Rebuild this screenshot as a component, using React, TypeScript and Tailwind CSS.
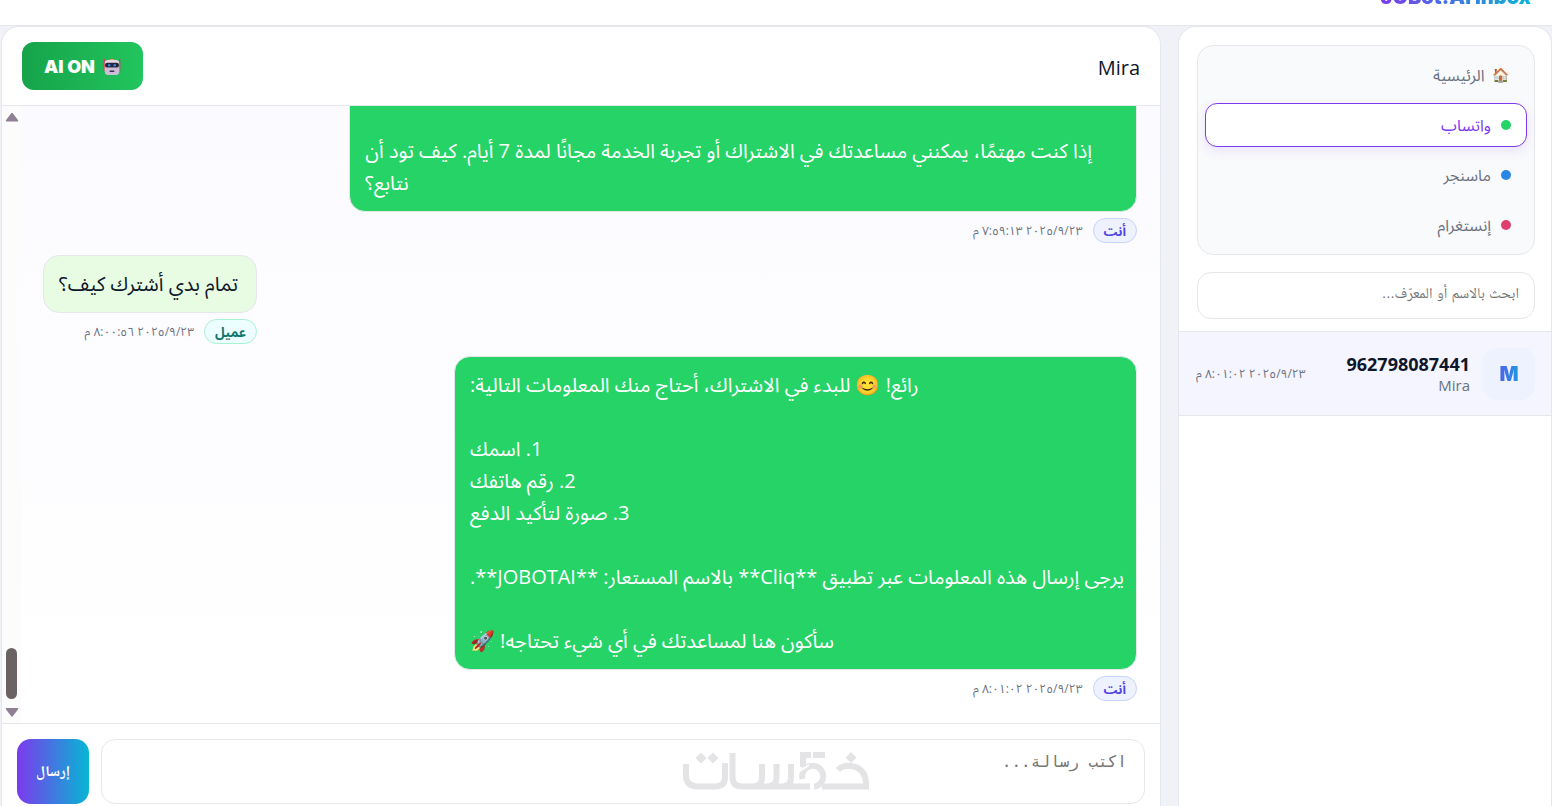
import { useState } from "react";

type Message = { id: number; from: "me" | "client"; text: string; time: string; width: string };

const messages: Message[] = [
  {
    id: 1,
    from: "me",
    text: "\n\nإذا كنت مهتمًا، يمكنني مساعدتك في الاشتراك أو تجربة الخدمة مجانًا لمدة 7 أيام. كيف تود أن نتابع؟",
    time: "٢٠٢٥/٩/٢٣ ٧:٥٩:١٣ م",
    width: "w-[72%]",
  },
  { id: 2, from: "client", text: "تمام بدي أشترك كيف؟", time: "٢٠٢٥/٩/٢٣ ٨:٠٠:٥٦ م", width: "w-[214px]" },
  {
    id: 3,
    from: "me",
    text: "رائع! 😊 للبدء في الاشتراك، أحتاج منك المعلومات التالية:\n\n1. اسمك\n2. رقم هاتفك\n3. صورة لتأكيد الدفع\n\nيرجى إرسال هذه المعلومات عبر تطبيق **Cliq** بالاسم المستعار: **JOBOTAI**.\n\nسأكون هنا لمساعدتك في أي شيء تحتاجه! 🚀",
    time: "٢٠٢٥/٩/٢٣ ٨:٠١:٠٢ م",
    width: "w-[683px]",
  },
];

const channels = [
  { id: "whatsapp", label: "واتساب", dot: "bg-[#25d366]" },
  { id: "messenger", label: "ماسنجر", dot: "bg-[#2b87e3]" },
  { id: "instagram", label: "إنستغرام", dot: "bg-[#dc3f70]" },
];

function RobotIcon() {
  return (
    <svg viewBox="0 0 18 18" className="size-[18px]" aria-hidden="true">
      <path d="M1.3 1v12M16.7 1v12" stroke="#d8405f" strokeWidth="1.3" />
      <path d="M6 2.4Q6.500 .8 9 .8t3 1.600z" fill="#f59a3c" />
      <path d="M1.800 5Q1.800 2 5.500 2h7q3.700 0 3.700 3v8q0 4-4 4H5.800q-4 0-4-4z" fill="#e3d9ea" />
      <path d="M1.800 9.500h14.400V13q0 4-4 4H5.800q-4 0-4-4z" fill="#cdbcd9" />
      <rect x="2" y="4.800" width="14" height="4.800" rx="2.200" fill="#2a2438" />
      <circle cx="6.300" cy="7.300" r="1.300" fill="#2f86e8" />
      <circle cx="11.700" cy="7.300" r="1.300" fill="#2f86e8" />
      <rect x="6.600" y="12.600" width="4.800" height="1.500" rx=".7" fill="#3a3148" />
    </svg>
  );
}

function KhamsatLogo() {
  return (
    <svg viewBox="0 0 186 38" className="h-[38px] w-[186px]" role="img" aria-label="خمسات">
      <g fill="none" stroke="#e4e4e7" strokeWidth="6">
        <path d="M3 12V23Q3 34.500 15 34.500H32Q42 34.500 42 25V11" />
        <path d="M49.500 1V25Q49.500 34.500 59 34.500H127" />
        <path d="M79 12V25Q79 34 71 34M93.500 12V25Q93.500 34 86 34M108 12V25Q108 34 101 34" />
        <path d="M120 0V15M117 3h11M130 3H142" />
        <path d="M119.500 27A10.500 10.500 0 1 1 131 34.700" />
        <path d="M155 18Q160 13 168 14Q183 16 183 33V34.500H139" />
      </g>
      <path d="M116 19.500L126 13M128.500 29V38" fill="none" stroke="#fff" strokeWidth="1.800" />
      <path
        fill="#e4e4e7"
        d="M18 .5l5.500 5.500L18 11.500 12.500 6zM30 .5L35.500 6 30 11.500 24.500 6zM168 0l5.500 5.500L168 11l-5.500-5.500z"
      />
    </svg>
  );
}

function ScrollTrack() {
  return (
    <div className="flex w-[19px] shrink-0 flex-col items-center bg-[#fcfcfc] py-1.5" aria-hidden="true">
      <svg viewBox="0 0 14 10" className="h-2.5 w-3.5">
        <path d="M7 1.500L12.500 8.800H1.500z" fill="#8f8096" stroke="#8f8096" strokeWidth="1.500" strokeLinejoin="round" />
      </svg>
      <div className="flex-1" />
      <div className="mb-2 h-[51px] w-[11px] rounded-full bg-[#6b6264]" />
      <svg viewBox="0 0 14 10" className="h-2.5 w-3.5">
        <path d="M7 9L12.500 1.700H1.500z" fill="#8f8096" stroke="#8f8096" strokeWidth="1.500" strokeLinejoin="round" />
      </svg>
    </div>
  );
}

function Bubble({ message }: { message: Message }) {
  const mine = message.from === "me";
  return (
    <article className={`flex max-w-[72%] shrink-0 flex-col items-start gap-1.5 ${message.width} ${mine ? "self-start" : "self-end"}`}>
      <p
        className={`w-full rounded-2xl border border-[#e5e7eb] py-3 pr-2 pl-[15px] text-left text-[20px] leading-8 whitespace-pre-line ${
          mine ? "bg-[#25d366] text-white" : "bg-[#e7fce3] text-[#0f172a]"
        }`}
      >
        {message.text}
      </p>
      <div className="flex items-center gap-2.5 whitespace-nowrap">
        <span
          className={`flex h-[25px] items-center rounded-full border px-2.5 text-[13px] leading-5 font-bold ${
            mine ? "border-[#c7d2fe] bg-[#eef2ff] text-[#4f46e5]" : "border-[#a7f3d0] bg-[#ecfeff] text-[#0f766e]"
          }`}
        >
          {mine ? "أنت" : "عميل"}
        </span>
        <time className="text-[12px] leading-5 text-[#6b7280]">{message.time}</time>
      </div>
    </article>
  );
}

export default function App() {
  const [active, setActive] = useState("whatsapp");
  const [aiOn, setAiOn] = useState(true);

  return (
    <div
      dir="rtl"
      className="flex h-screen flex-col overflow-hidden bg-[#f1f2f8] font-['Open_Sans','Noto_Sans_Arabic','Noto_Color_Emoji','DejaVu_Sans',sans-serif] text-[#0f172a]"
    >
      <header className="flex h-[26px] shrink-0 items-end overflow-hidden border-b border-[#e5e7eb] bg-white px-[21px] pb-3">
        <h1 className="bg-linear-to-r/srgb from-[#7c3aed] to-[#06b6d4] bg-clip-text font-['Inter','Open_Sans',sans-serif] text-[20px] leading-8 font-black text-transparent">
          JOBot.AI Inbox
        </h1>
      </header>

      <div className="flex min-h-0 flex-1 gap-[17px] pl-px">
        <aside className="flex w-[374px] shrink-0 flex-col rounded-t-[18px] border border-b-0 border-[#e5e7eb] bg-white">
          <div className="flex flex-col gap-[17px] pt-[18px] pr-4 pb-3 pl-[18px]">
            <nav className="flex flex-col gap-1.5 rounded-2xl border border-[#e5e7eb] bg-[#f9fafc] p-[7px] text-[16px] leading-5 text-[#6b7280]">
              <a href="#home" className="flex h-11 items-center gap-2 px-[17px]">
                <span className="text-[14px]">🏠</span>
                الرئيسية
              </a>
              {channels.map((c) => (
                <button
                  key={c.id}
                  type="button"
                  onClick={() => setActive(c.id)}
                  className={`flex h-11 items-center gap-2.5 rounded-xl border px-[15px] ${
                    active === c.id
                      ? "border-[#7c3aed] bg-white text-[#7c3aed] shadow-[0_4px_12px_rgba(124,58,237,0.12)]"
                      : "border-transparent"
                  }`}
                >
                  <span className={`size-2.5 rounded-full ${c.dot}`} />
                  {c.label}
                </button>
              ))}
            </nav>
            <input
              type="search"
              aria-label="بحث"
              placeholder="ابحث بالاسم أو المعرّف..."
              className="h-[47px] w-full rounded-[14px] border border-[#e5e7eb] bg-white px-[15px] pb-1.5 font-['Liberation_Sans','Noto_Naskh_Arabic',sans-serif] text-[15px] outline-none placeholder:text-[#757575]"
            />
          </div>
          <button
            type="button"
            className="flex items-center gap-[13px] border-y border-[#e5e7eb] bg-[#f4f5ff] pt-4 pr-4 pb-[15px] pl-[17px] text-start"
          >
            <span className="flex size-[52px] shrink-0 items-center justify-center rounded-[14px] bg-[#eef2ff]">
              <span className="bg-linear-to-r/srgb from-[#4f62ea] to-[#1f98e0] bg-clip-text font-['Inter',sans-serif] text-[20px] leading-6 font-black text-transparent">
                M
              </span>
            </span>
            <span className="flex flex-1 flex-col">
              <span className="font-['Open_Sans'] text-[18px] leading-[21px] font-bold">962798087441</span>
              <span className="text-[15px] leading-5 text-[#6b7280]">Mira</span>
            </span>
            <time className="text-[12px] leading-5 whitespace-nowrap text-[#6b7280]">٢٠٢٥/٩/٢٣ ٨:٠١:٠٢ م</time>
          </button>
        </aside>

        <main className="flex min-w-0 flex-1 flex-col rounded-t-[18px] border border-b-0 border-[#e5e7eb] bg-white">
          <div className="flex h-[79px] shrink-0 items-center justify-between border-b border-[#e5e7eb] px-5">
            <h2 className="pt-1 text-[20px] leading-7">Mira</h2>
            <button
              type="button"
              aria-pressed={aiOn}
              onClick={() => setAiOn(!aiOn)}
              className="flex h-12 w-[121px] items-center justify-center gap-2 rounded-xl bg-linear-to-r/srgb from-[#16a34a] to-[#22c55e] pt-0.5 font-['Inter',sans-serif] text-[18px] leading-6 font-black text-white"
            >
              <RobotIcon />
              <span>{aiOn ? "AI ON" : "AI OFF"}</span>
            </button>
          </div>

          <div className="flex min-h-0 flex-1 bg-linear-to-b from-[#fbfbff] to-white">
            <section className="flex min-w-0 flex-1 flex-col justify-end gap-3 overflow-hidden pr-[23px] pb-[22px] pl-[22px]">
              {messages.map((m) => (
                <Bubble key={m.id} message={m} />
              ))}
            </section>
            <ScrollTrack />
          </div>

          <form
            onSubmit={(e) => e.preventDefault()}
            className="relative flex h-[83px] shrink-0 items-start gap-3 border-t border-[#e5e7eb] p-[15px]"
          >
            <textarea
              aria-label="الرسالة"
              placeholder="اكتب رسالة..."
              className="h-[65px] flex-1 resize-none rounded-[14px] border border-[#e5e7eb] bg-white px-[17px] py-3 font-['DejaVu_Sans_Mono',monospace] text-[16px] leading-5 outline-none placeholder:text-[#757575]"
            />
            <button
              type="submit"
              className="h-[65px] w-[72px] rounded-[14px] bg-linear-to-r/srgb from-[#7c3aed] to-[#06b6d4] font-['Liberation_Sans','Noto_Naskh_Arabic',sans-serif] text-[15px] font-bold text-white"
            >
              إرسال
            </button>
            <div className="pointer-events-none absolute top-7 left-[681px]">
              <KhamsatLogo />
            </div>
          </form>
        </main>
      </div>
    </div>
  );
}
